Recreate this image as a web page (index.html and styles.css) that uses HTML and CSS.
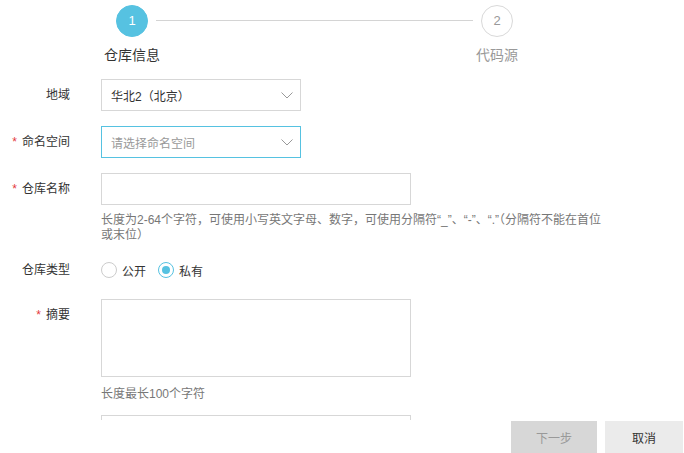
FILE: index.html
```html
<!DOCTYPE html>
<html lang="zh-CN">
  <head>
    <meta charset="UTF-8" />
    <meta name="viewport" content="width=device-width, initial-scale=1.0" />
    <title>创建仓库</title>
    <link rel="stylesheet" href="styles.css">
  </head>
  <body>
    <div class="steps">
      <div class="step active">
        <div class="step-num">1</div>
        <div class="step-title">仓库信息</div>
      </div>
      <div class="step-line"></div>
      <div class="step">
        <div class="step-num">2</div>
        <div class="step-title">代码源</div>
      </div>
    </div>

    <div class="form">
      <div class="row">
        <label class="label">地域</label>
        <div class="field">
          <div class="select">
            <span>华北2（北京）</span>
            <svg width="12" height="7" viewBox="0 0 12 7"><polyline points="0.5,0.5 6,6 11.5,0.5" fill="none" stroke="#999" stroke-width="1"/></svg>
          </div>
        </div>
      </div>

      <div class="row">
        <label class="label"><i class="req">*</i>命名空间</label>
        <div class="field">
          <div class="select focus">
            <span class="placeholder">请选择命名空间</span>
            <svg width="12" height="7" viewBox="0 0 12 7"><polyline points="0.5,0.5 6,6 11.5,0.5" fill="none" stroke="#999" stroke-width="1"/></svg>
          </div>
        </div>
      </div>

      <div class="row row-help">
        <label class="label"><i class="req">*</i>仓库名称</label>
        <div class="field">
          <div class="input"></div>
          <div class="help">长度为2-64个字符，可使用小写英文字母、数字，可使用分隔符“_”、“-”、“.”（分隔符不能在首位或末位）</div>
        </div>
      </div>

      <div class="row row-radio">
        <label class="label">仓库类型</label>
        <div class="field radios">
          <span class="radio"><i class="dot"></i>公开</span>
          <span class="radio checked"><i class="dot"></i>私有</span>
        </div>
      </div>

      <div class="row row-help2">
        <label class="label"><i class="req">*</i>摘要</label>
        <div class="field">
          <div class="textarea"></div>
          <div class="help help-short">长度最长100个字符</div>
        </div>
      </div>

      <div class="row">
        <label class="label"></label>
        <div class="field">
          <div class="input"></div>
        </div>
      </div>
    </div>

    <div class="footer">
      <button class="btn btn-next" disabled>下一步</button>
      <button class="btn btn-cancel">取消</button>
    </div>
  </body>
</html>
```

FILE: styles.css
```css
html,
body {
  margin: 0;
  padding: 0;
  background: #fff;
  overflow: hidden;
  height: 100%;
}

body {
  font-family: "Liberation Sans", "Noto Sans CJK SC", sans-serif;
  font-size: 12px;
  color: #333;
}

/* stepper */
.steps {
  display: flex;
  align-items: flex-start;
  padding-left: 104px;
  padding-top: 5px;
}

.step {
  width: 56px;
  display: flex;
  flex-direction: column;
  align-items: center;
}

.step-num {
  width: 30px;
  height: 30px;
  border-radius: 50%;
  border: 1px solid #d9d9d9;
  color: #999;
  font-size: 13px;
  line-height: 30px;
  text-align: center;
}

.step.active .step-num {
  background: #56c2e1;
  border-color: #56c2e1;
  color: #fff;
}

.step-title {
  margin-top: 8px;
  font-size: 14px;
  line-height: 20px;
  white-space: nowrap;
  color: #999;
}

.step.active .step-title {
  color: #333;
}

.step-line {
  width: 317px;
  height: 1px;
  background: #d4d4d4;
  margin: 15px -4px 0;
}

/* form */
.form {
  margin-top: 14px;
}

.row {
  display: flex;
  margin-bottom: 15px;
}

.row-help {
  margin-bottom: 11px;
}

.row-radio {
  margin-bottom: 13px;
}

.row-help2 {
  margin-bottom: 13px;
}

.label {
  width: 70px;
  margin-right: 31px;
  text-align: right;
  line-height: 32px;
  flex-shrink: 0;
  color: #333;
}

.req {
  font-style: normal;
  color: #e4393c;
  margin-right: 5px;
}

.select {
  box-sizing: border-box;
  width: 200px;
  height: 32px;
  border: 1px solid #d7d7d7;
  display: flex;
  align-items: center;
  justify-content: space-between;
  padding: 0 7px 0 9px;
}

.select.focus {
  border-color: #56c2e1;
}

.placeholder {
  color: #999;
}

.input {
  box-sizing: border-box;
  width: 310px;
  height: 32px;
  border: 1px solid #d7d7d7;
}

.textarea {
  box-sizing: border-box;
  width: 310px;
  height: 78px;
  border: 1px solid #d7d7d7;
}

.help {
  width: 505px;
  margin-top: 8px;
  line-height: 15px;
  color: #777;
}

.help-short {
  margin-top: 10px;
}

.radios {
  display: flex;
  align-items: center;
  height: 32px;
  gap: 12px;
}

.radio {
  display: flex;
  align-items: center;
}

.radio .dot {
  box-sizing: border-box;
  width: 16px;
  height: 16px;
  border-radius: 50%;
  border: 1px solid #ccc;
  margin-right: 5px;
  position: relative;
}

.radio.checked .dot {
  border-color: #56c2e1;
}

.radio.checked .dot::after {
  content: "";
  position: absolute;
  left: 3px;
  top: 3px;
  width: 8px;
  height: 8px;
  border-radius: 50%;
  background: #56c2e1;
}

/* footer */
.footer {
  position: fixed;
  left: 0;
  right: 0;
  bottom: 0;
  height: 32px;
  padding-top: 1px;
  background: #fff;
  display: flex;
  justify-content: flex-end;
  gap: 8px;
  padding-right: 1px;
}

.btn {
  height: 32px;
  border: none;
  font-family: inherit;
  font-size: 12px;
  padding: 0;
}

.btn-next {
  width: 86px;
  background: #d7d7d7;
  color: #999;
}

.btn-cancel {
  width: 78px;
  background: #ebebeb;
  color: #333;
}
```
